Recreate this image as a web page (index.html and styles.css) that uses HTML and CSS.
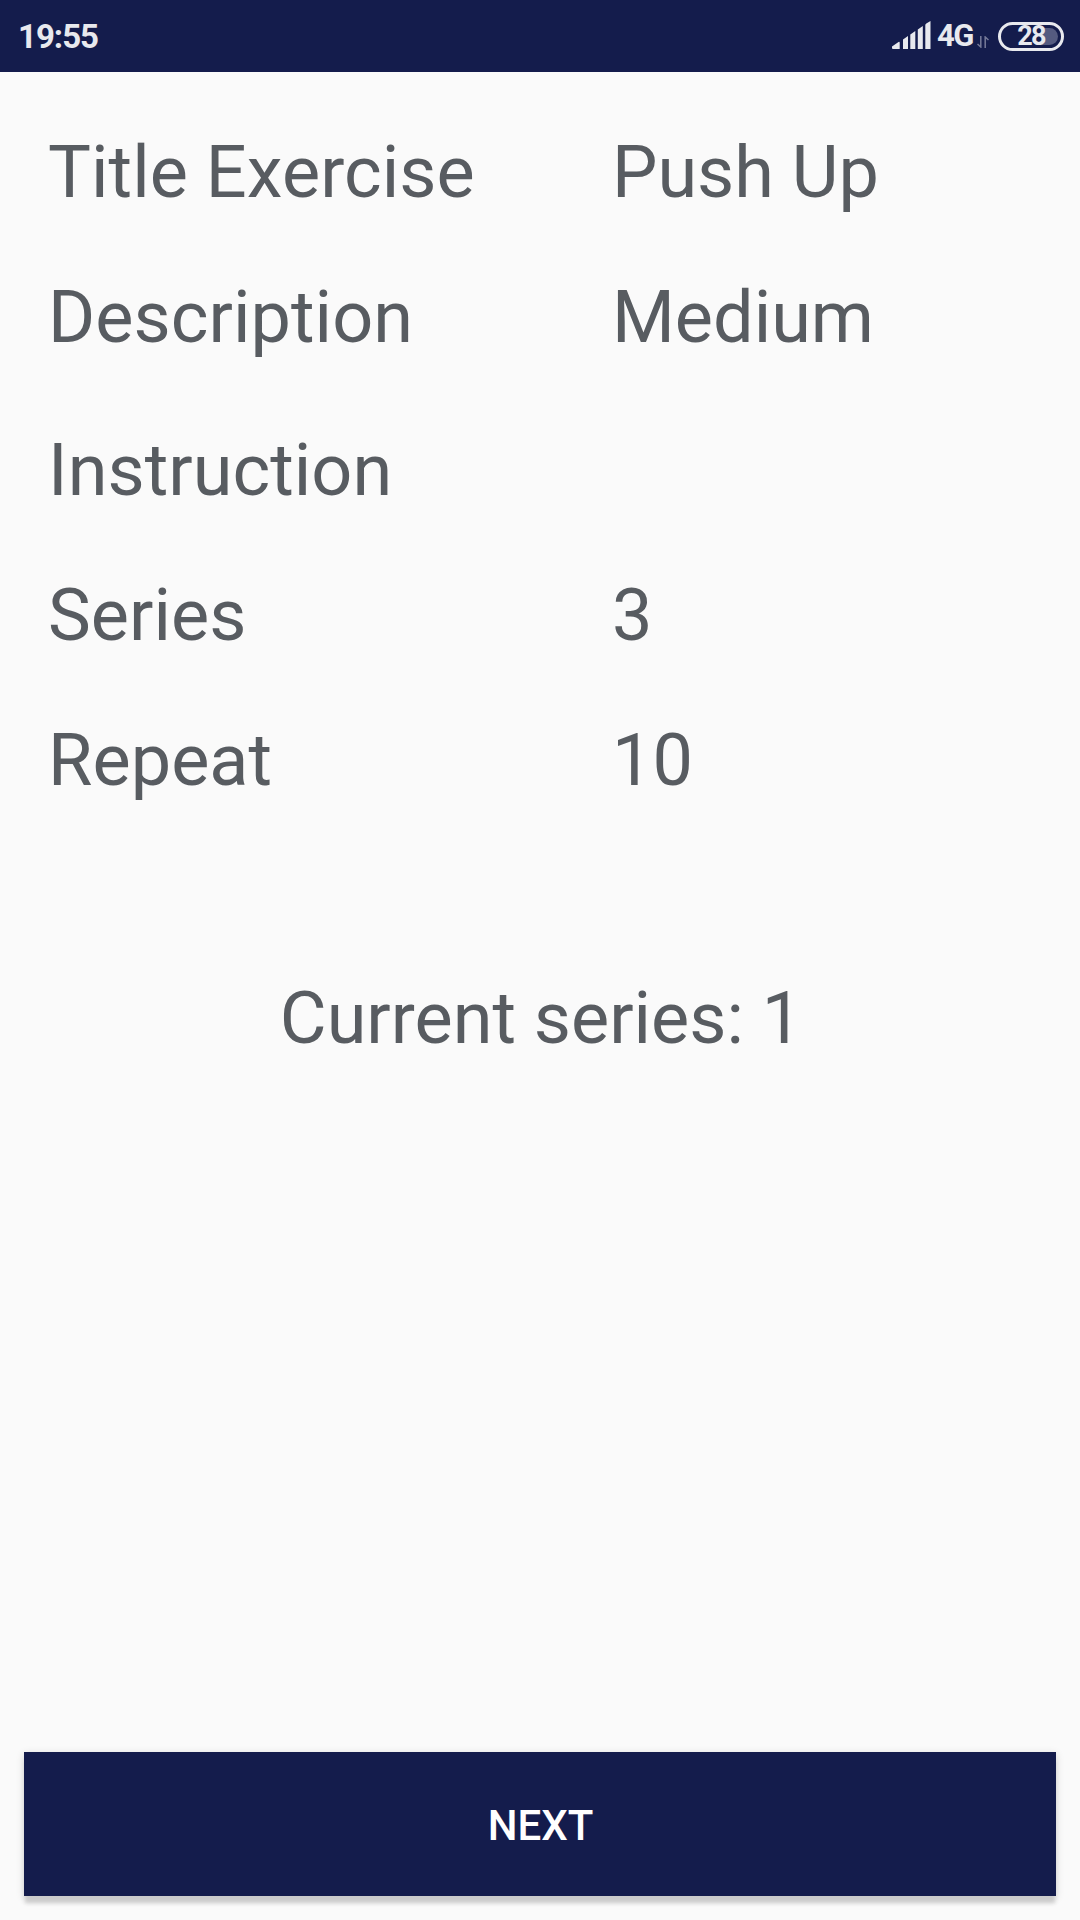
FILE: index.html
```
<!DOCTYPE html>
<html lang="en">
<head>
<meta charset="utf-8">
<title>Exercise</title>
<link rel="stylesheet" href="styles.css">
</head>
<body>
<header class="status">
  <span class="clock">19:55</span>
  <div class="indicators">
    <svg class="signal" width="39" height="28" viewBox="0 0 39 28" fill="#e8e9ee"><path d="M1 28q-1 0-1-1v-1.500L6.500 21q1.200-.5 1.200.7V28zM11 28V18.500l5-3.500v13zM18.300 28V13.500l5-3.500v18zM25.800 28V8.500l5-3.500v23zM33.300 28V4q0-1 1-1.600L38.500 0v28z"/></svg>
    <span class="network">4G</span>
    <svg class="data" width="12" height="12" viewBox="0 0 12 12" fill="none" stroke="#777b99" stroke-width="1.500"><path d="M3.800 0v11L.5 8M8.200 12V1l3.300 3"/></svg>
    <span class="battery"><span class="level">28</span></span>
  </div>
</header>
<main class="screen">
  <dl class="details">
    <div class="row"><dt>Title Exercise</dt><dd>Push Up</dd></div>
    <div class="row"><dt>Description</dt><dd>Medium</dd></div>
    <div class="row instruction"><dt>Instruction</dt><dd></dd></div>
    <div class="row"><dt>Series</dt><dd>3</dd></div>
    <div class="row"><dt>Repeat</dt><dd>10</dd></div>
  </dl>
  <p class="current">Current series: 1</p>
  <button class="next" type="button">NEXT</button>
</main>
</body>
</html>
```
FILE: styles.css
```
* { box-sizing: border-box; }
body { margin: 0; height: 1920px; display: flex; flex-direction: column; background: #fafafa; color: #585c61; font-family: Roboto, sans-serif; overflow: hidden; }
.status { height: 72px; flex: none; display: flex; justify-content: space-between; padding: 0 16px 0 18px; background: #141c4c; color: #e8e9ee; }
.clock { font-size: 33px; font-weight: 700; line-height: 74px; letter-spacing: -1px; }
.indicators { display: flex; align-items: center; }
.signal { margin-top: -2px; }
.network { margin-left: 6px; margin-right: 1px; font-size: 31px; font-weight: 700; line-height: 76px; letter-spacing: -1.500px; }
.data { margin: 12px 9px 0 3px; }
.battery { width: 66px; height: 29px; border: 3px solid #e8e9ee; border-radius: 15px; display: flex; justify-content: center; align-items: center; position: relative; }
.battery::after { content: ""; position: absolute; right: 3px; top: 3px; width: 16px; height: 17px; border-radius: 0 9px 9px 0; background: #555b80; }
.level { position: relative; z-index: 1; font-size: 27px; font-weight: 700; line-height: 26px; letter-spacing: -1.800px; }
.screen { flex: 1; display: flex; flex-direction: column; padding: 50px 24px 24px; }
.details { margin: 0; padding: 0 24px; }
.row { display: flex; height: 145px; font-size: 72px; line-height: 102px; }
.instruction { height: 153px; padding-top: 8px; }
dt { width: 564px; letter-spacing: .05px; }
dd { margin: 0; }
.current { margin: 113px 0 0; padding-left: 2px; text-align: center; font-size: 72px; line-height: 102px; }
.next { margin-top: auto; height: 144px; padding: 3px 0 0 1px; border: 0; background: #141c4c; color: #fff; font: 500 42px/141px Roboto, sans-serif; box-shadow: 0 8px 4px -1px #cbcbcb, 0 2px 8px rgba(0,0,0,.15); }
```
